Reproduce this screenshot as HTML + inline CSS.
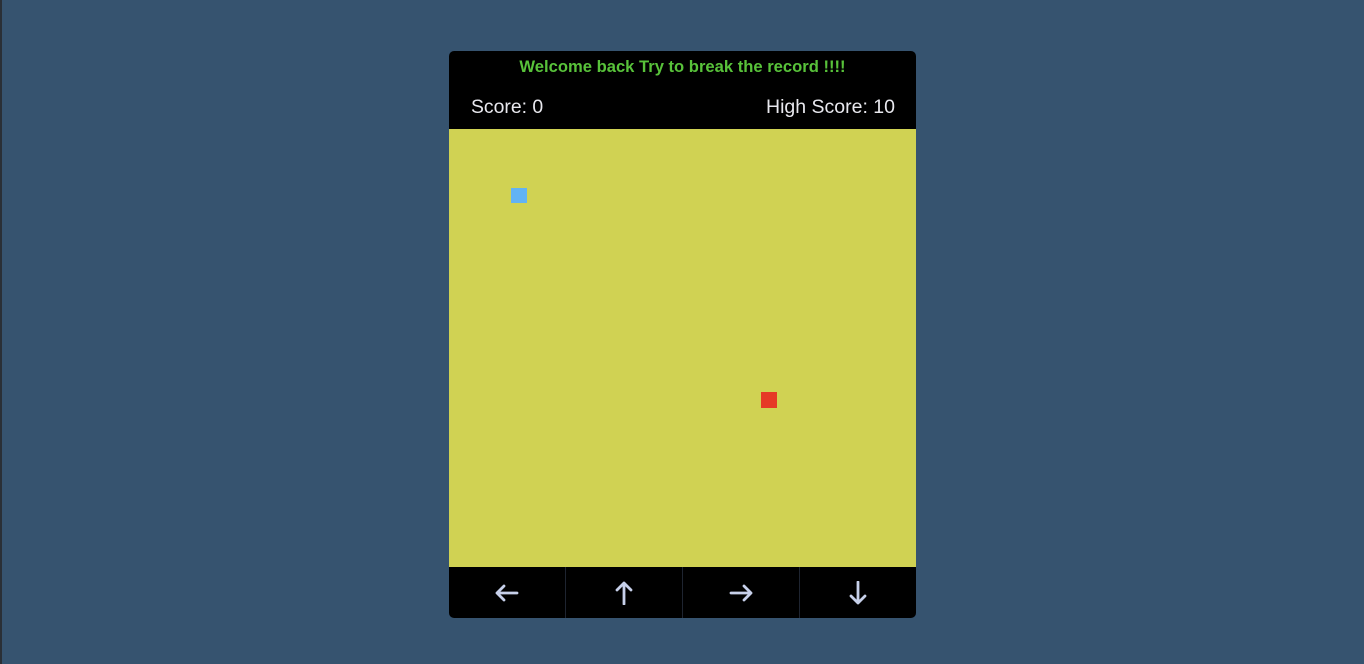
<!DOCTYPE html>
<html><head><meta charset="utf-8"><style>
html,body{margin:0;padding:0;width:1364px;height:664px;overflow:hidden;background:#36536f;font-family:"Liberation Sans",sans-serif;}
.lb{position:absolute;left:0;top:0;width:2px;height:664px;background:#2a2f36;}
.card{position:absolute;left:449px;top:51px;width:467px;height:567px;background:#000;border-radius:5px;overflow:hidden;}
.wel{position:absolute;top:6px;left:0;width:100%;text-align:center;color:#58c23a;font-weight:bold;font-size:16.6px;}
.sc{position:absolute;top:45px;left:22px;color:#e8e8ee;font-size:19.4px;}
.hs{position:absolute;top:45px;right:21px;color:#e8e8ee;font-size:19.5px;}
.game{position:absolute;top:78px;left:0;width:467px;height:438px;background:#d0d253;}
.sq{position:absolute;width:16px;height:15px;}
.btns{position:absolute;top:516px;left:0;width:467px;height:51px;display:flex;}
.btns div{flex:1;border-left:1px solid #1e2430;display:flex;align-items:center;justify-content:center;}
.btns div:first-child{border-left:none;}
svg{stroke:#c7d0ea;stroke-width:2.8;fill:none;stroke-linecap:round;stroke-linejoin:round;}
</style></head><body>
<div class="lb"></div>
<div class="card">
<div class="wel">Welcome back Try to break the record !!!!</div>
<div class="sc">Score: 0</div>
<div class="hs">High Score: 10</div>
<div class="game">
<div class="sq" style="left:62px;top:59px;background:#62b3f4"></div>
<div class="sq" style="left:312px;top:263px;height:16px;background:#e63a26"></div>
</div>
<div class="btns">
<div><svg width="24" height="24" viewBox="0 0 24 24"><path d="M2 12H22M2 12L9 5M2 12L9 19"/></svg></div>
<div><svg width="24" height="24" viewBox="0 0 24 24"><path d="M12 2V23M12 2L5 9M12 2L19 9"/></svg></div>
<div><svg width="24" height="24" viewBox="0 0 24 24"><path d="M2 12H22M22 12L15 5M22 12L15 19"/></svg></div>
<div><svg width="24" height="24" viewBox="0 0 24 24"><path d="M12 1V22M12 22L5 15M12 22L19 15"/></svg></div>
</div>
</div>
</body></html>
